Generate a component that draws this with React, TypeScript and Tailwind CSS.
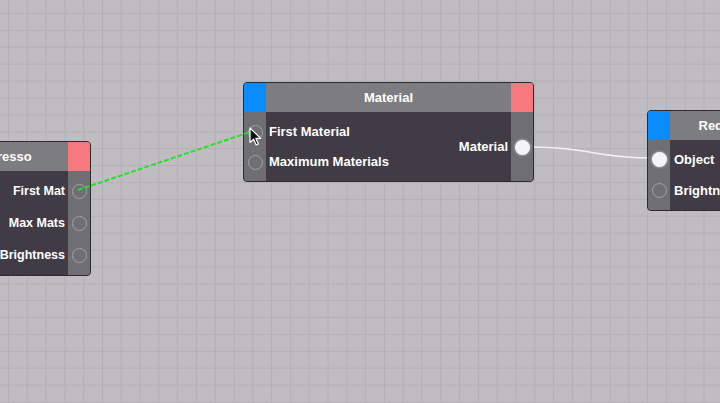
import React from "react";

function Port({ filled = false }: { filled?: boolean }) {
  return filled ? (
    <div className="w-[15px] h-[15px] rounded-full bg-[#f4f4f6] shadow-[0_0_3px_rgba(255,255,255,0.7)]" />
  ) : (
    <div className="w-[15px] h-[15px] rounded-full border-[1.5px] border-[#a3a2a6]" />
  );
}

export default function App() {
  const font = { fontFamily: '"Liberation Sans", Arial, sans-serif' };
  return (
    <div
      className="relative w-[720px] h-[403px] overflow-hidden bg-[#c0bdc2] bg-[linear-gradient(to_right,#b4b1b6_1px,transparent_1px),linear-gradient(to_bottom,#b4b1b6_1px,transparent_1px)] bg-[size:18.8px_16.9px] bg-[position:8px_13px]"
      style={font}
    >
      <svg className="absolute inset-0" width={720} height={403}>
        <path d="M527 147 C 590 147, 595 158, 652 158" stroke="#f2f2f4" strokeWidth={1.5} fill="none" />
      </svg>

      {/* Left node (Espresso) */}
      <div className="absolute left-[-86px] top-[141px] w-[177px] h-[135px] rounded-[4px] border border-[#2c2a30] overflow-hidden flex flex-col bg-[#403b45]">
        <div className="h-[29px] flex bg-[#7d7c80] shrink-0">
          <div className="w-[22px] bg-[#0a8cff]" />
          <div className="flex-1 flex items-center justify-center text-white font-bold text-[13px]">Espresso</div>
          <div className="w-[22px] bg-[#f7787e]" />
        </div>
        <div className="flex-1 flex">
          <div className="w-[22px] bg-[#6f6e72]" />
          <div className="flex-1 flex flex-col pt-[4px] items-end pr-[3px]">
            {["First Mat", "Max Mats", "Brightness"].map((t) => (
              <div key={t} className="h-[32px] flex items-center text-white font-bold text-[12.5px]">{t}</div>
            ))}
          </div>
          <div className="w-[22px] bg-[#6f6e72] flex flex-col pt-[4px] items-center">
            {[0, 1, 2].map((i) => (
              <div key={i} className="h-[32px] flex items-center"><Port /></div>
            ))}
          </div>
        </div>
      </div>

      {/* Material node */}
      <div className="absolute left-[243px] top-[82px] w-[291px] h-[100px] rounded-[4px] border border-[#2c2a30] overflow-hidden flex flex-col bg-[#403b45]">
        <div className="h-[29px] flex bg-[#7d7c80] shrink-0">
          <div className="w-[22px] bg-[#0a8cff]" />
          <div className="flex-1 flex items-center justify-center text-white font-bold text-[13px]">Material</div>
          <div className="w-[22px] bg-[#f7787e]" />
        </div>
        <div className="flex-1 flex">
          <div className="w-[22px] bg-[#6f6e72] flex flex-col pt-[5px] items-center">
            {[0, 1].map((i) => (
              <div key={i} className="h-[30px] flex items-center"><Port /></div>
            ))}
          </div>
          <div className="flex-1 flex justify-between">
            <div className="flex flex-col pt-[5px] pl-[3px]">
              {["First Material", "Maximum Materials"].map((t) => (
                <div key={t} className="h-[30px] flex items-center text-white font-bold text-[13px]">{t}</div>
              ))}
            </div>
            <div className="flex items-center pr-[3px] pt-[1px] text-white font-bold text-[13px]">Material</div>
          </div>
          <div className="w-[22px] bg-[#6f6e72] flex items-center justify-center pt-[1px]">
            <Port filled />
          </div>
        </div>
      </div>

      {/* Right node */}
      <div className="absolute left-[647px] top-[110px] w-[155px] h-[101px] rounded-[4px] border border-[#2c2a30] overflow-hidden flex flex-col bg-[#403b45]">
        <div className="h-[29px] flex bg-[#7d7c80] shrink-0">
          <div className="w-[22px] bg-[#0a8cff]" />
          <div className="flex-1 flex items-center justify-center text-white font-bold text-[13px]">Redshift</div>
          <div className="w-[22px] bg-[#f7787e]" />
        </div>
        <div className="flex-1 flex">
          <div className="w-[22px] bg-[#6f6e72] flex flex-col pt-[4px] items-center">
            <div className="h-[31px] flex items-center"><Port filled /></div>
            <div className="h-[31px] flex items-center"><Port /></div>
          </div>
          <div className="flex-1 flex flex-col pt-[4px] pl-[4px]">
            {["Object", "Brightness"].map((t) => (
              <div key={t} className="h-[31px] flex items-center text-white font-bold text-[13px]">{t}</div>
            ))}
          </div>
        </div>
      </div>

      {/* Dragged wire, drawn over the nodes */}
      <svg className="absolute inset-0 pointer-events-none" width={720} height={403}>
        <line x1={78} y1={190} x2={253} y2={131} stroke="#27e027" strokeWidth={2} strokeDasharray="5 2" />
      </svg>

      {/* Cursor */}
      <svg className="absolute left-[249px] top-[127px]" width={14} height={20} viewBox="0 0 14 20">
        <path d="M1 1 L1 15.5 L4.6 12.2 L7.2 18 L9.4 17 L6.9 11.4 L11.6 11.4 Z" fill="#111" stroke="#fff" strokeWidth={1.2} strokeLinejoin="round" />
      </svg>
    </div>
  );
}
